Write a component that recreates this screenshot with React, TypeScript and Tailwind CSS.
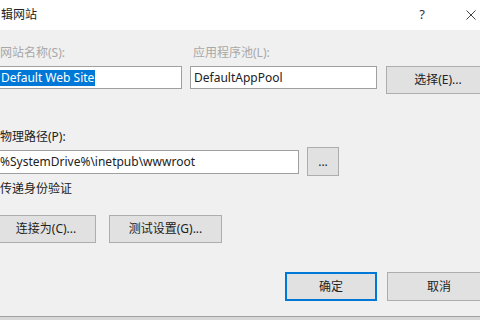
const FONT = '"Noto Sans", "Noto Sans CJK SC", sans-serif';

function Btn({ label, w, h, primary }: { label: string; w: string; h: string; primary?: boolean }) {
  return (
    <div
      className={`${w} ${h} flex items-center justify-center bg-[#e1e1e1] text-[12px] text-[#222] ${
        primary ? 'border-2 border-[#0078d7]' : 'border border-[#adadad]'
      }`}
    >
      {label}
    </div>
  );
}

export default function App() {
  return (
    <div className="w-[480px] h-[320px] overflow-hidden bg-[#f0f0f0] flex flex-col" style={{ fontFamily: FONT }}>
      {/* title bar */}
      <div className="h-[30px] shrink-0 bg-white flex items-center">
        <span className="text-[12px] text-[#222] pl-[1px]">辑网站</span>
        <span className="ml-auto text-[13px] text-[#333] w-[14px] text-center mr-[37px]">?</span>
        <svg width="10" height="10" viewBox="0 0 10 10" className="mr-[4px]">
          <path d="M0.5 0.5 L9.5 9.5 M9.5 0.5 L0.5 9.5" stroke="#444" strokeWidth="1" />
        </svg>
      </div>

      {/* body */}
      <div className="flex-1 flex flex-col -ml-[4px] w-[500px]">
        <div className="mt-[16px] h-[14px] flex text-[12px] leading-[14px] text-[#a8a8a8]">
          <span className="w-[197px] pl-[4px]">网站名称(S):</span>
          <span>应用程序池(L):</span>
        </div>

        <div className="mt-[6px] flex items-start">
          <div className="w-[186px] h-[23px] bg-white border border-[#a0a0a0] flex items-center pl-[3px] text-[12px]">
            <span className="bg-[#0078d7] text-white leading-[16px] px-[1px]">Default Web Site</span>
          </div>
          <div className="ml-[8px] w-[187px] h-[23px] bg-white border border-[#a0a0a0] flex items-center pl-[3px] text-[12px] text-[#222]">
            DefaultAppPool
          </div>
          <div className="ml-[9px]">
            <Btn label="选择(E)..." w="w-[104px]" h="h-[28px]" />
          </div>
        </div>

        <div className="mt-[36px] h-[14px] text-[12px] leading-[14px] text-[#222] pl-[4px]">物理路径(P):</div>

        <div className="mt-[3px] flex items-center">
          <div className="w-[303px] h-[24px] bg-white border border-[#a0a0a0] flex items-center pl-[3px] text-[12px] text-[#222]">
            %SystemDrive%\inetpub\wwwroot
          </div>
          <div className="ml-[8px]">
            <Btn label="..." w="w-[32px]" h="h-[29px]" />
          </div>
        </div>

        <div className="mt-[6px] h-[14px] text-[12px] leading-[14px] text-[#222] pl-[4px]">传递身份验证</div>

        <div className="mt-[19px] flex">
          <Btn label="连接为(C)..." w="w-[100px]" h="h-[28px]" />
          <div className="ml-[13px]">
            <Btn label="测试设置(G)..." w="w-[113px]" h="h-[28px]" />
          </div>
        </div>

        <div className="mt-[29px] flex">
          <div className="ml-[289px]">
            <Btn label="确定" w="w-[92px]" h="h-[29px]" primary />
          </div>
          <div className="ml-[10px]">
            <Btn label="取消" w="w-[104px]" h="h-[29px]" />
          </div>
        </div>
      </div>

      <div className="h-[1px] bg-[#a0a0a0]" />
      <div className="h-[3px] bg-[#d8d8d8]" />
    </div>
  );
}
